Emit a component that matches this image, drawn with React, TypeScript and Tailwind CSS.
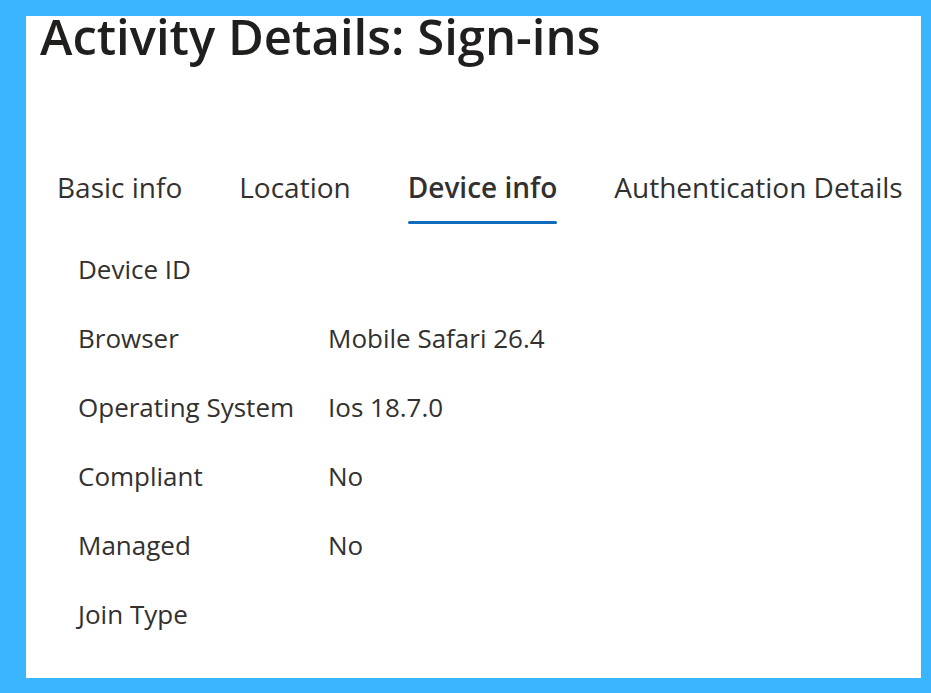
import React from "react";

/** 详情行 */
interface DetailRow {
  label: string;
  value?: string;
}

const tabs = ["Basic info", "Location", "Device info", "Authentication Details"];
const activeTab = "Device info";

const rows: DetailRow[] = [
  { label: "Device ID" },
  { label: "Browser", value: "Mobile Safari 26.4" },
  { label: "Operating System", value: "Ios 18.7.0" },
  { label: "Compliant", value: "No" },
  { label: "Managed", value: "No" },
  { label: "Join Type" },
];

export default function App(): React.ReactElement {
  return (
    <div
      className="w-[931px] h-[693px] bg-[#3ab5ff] pt-[16px] pl-[26px] pr-[10px] pb-[15px]"
      style={{ fontFamily: '"Open Sans", "Noto Sans", sans-serif' }}
    >
      <div className="flex flex-col h-full bg-white text-[#323130]">
        {/* 标题 */}
        <h1 className="pl-[14px] -mt-[4px] text-[49px] leading-[48px] font-semibold text-[#201f1e] whitespace-nowrap">
          Activity Details: Sign-ins
        </h1>

        {/* 标签页 */}
        <div className="flex gap-[57px] pl-[31px] mt-[109px]">
          {tabs.map((tab) => (
            <div key={tab} className="flex flex-col items-stretch">
              <span
                className={`text-[28px] leading-[36px] whitespace-nowrap ${
                  tab === activeTab ? "font-semibold" : "font-normal"
                }`}
              >
                {tab}
              </span>
              <span
                className={`mt-[16px] h-[3px] rounded-full ${
                  tab === activeTab ? "bg-[#0f6cbd]" : "bg-transparent"
                }`}
              />
            </div>
          ))}
        </div>

        {/* 设备信息 */}
        <div className="flex flex-col pl-[52px] mt-[27px]">
          {rows.map((row) => (
            <div key={row.label} className="flex h-[69px] items-start text-[26px] leading-[36px]">
              <span className="w-[250px] whitespace-nowrap">{row.label}</span>
              <span className="whitespace-nowrap">{row.value ?? ""}</span>
            </div>
          ))}
        </div>
      </div>
    </div>
  );
}
